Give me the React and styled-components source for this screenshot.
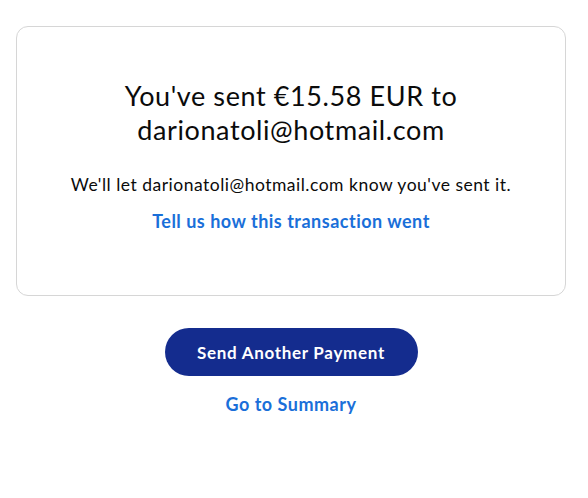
import React from 'react';
import styled, { createGlobalStyle } from 'styled-components';

const GlobalStyle = createGlobalStyle`
  html, body {
    margin: 0;
    padding: 0;
    background: #ffffff;
  }
  body {
    font-family: Lato, "Open Sans", "Liberation Sans", sans-serif;
    color: #0b0b0b;
  }
`;

const App = () => {
  return (
    <>
      <GlobalStyle />
      <Page>
        <Card>
          <Heading>
            You've sent €15.58 EUR to
            <br />
            darionatoli@hotmail.com
          </Heading>
          <Message>We'll let darionatoli@hotmail.com know you've sent it.</Message>
          <TextLink href='#' $gap={13}>Tell us how this transaction went</TextLink>
        </Card>
        <Actions>
          <PrimaryButton type='button'>Send Another Payment</PrimaryButton>
          <TextLink href='#' $gap={16}>Go to Summary</TextLink>
        </Actions>
      </Page>
    </>
  );
};

export default App;

const Page = styled.div`
  width: 588px;
  padding: 26px 22px 0 16px;
  box-sizing: border-box;
  display: flex;
  flex-direction: column;
  align-items: stretch;
`;

const Card = styled.div`
  border: 1px solid #d6d6d6;
  border-radius: 12px;
  height: 270px;
  box-sizing: border-box;
  padding: 52px 20px 0;
  display: flex;
  flex-direction: column;
  align-items: center;
  text-align: center;
`;

const Heading = styled.h1`
  margin: 0;
  font-size: 27px;
  font-weight: 400;
  line-height: 34px;
  letter-spacing: 0.6px;
  color: #0b0b0b;
`;

const Message = styled.p`
  margin: 27px 0 0;
  font-size: 17.5px;
  line-height: 22px;
  letter-spacing: 0.5px;
  color: #0b0b0b;
`;

const TextLink = styled.a`
  margin-top: ${({ $gap }) => $gap}px;
  font-size: 18px;
  font-weight: 700;
  line-height: 24px;
  letter-spacing: 0.5px;
  color: #1a6fd9;
  text-decoration: none;
`;

const Actions = styled.div`
  display: flex;
  flex-direction: column;
  align-items: center;
  margin-top: 32px;
`;

const PrimaryButton = styled.button`
  width: 253px;
  height: 48px;
  border: none;
  border-radius: 24px;
  background: #142c8e;
  color: #ffffff;
  font-family: inherit;
  font-size: 17px;
  font-weight: 700;
  letter-spacing: 0.7px;
  cursor: pointer;
`;
